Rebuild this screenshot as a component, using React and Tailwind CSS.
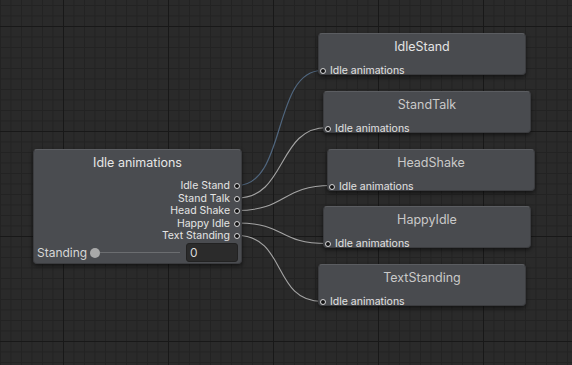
import React from "react";

const rightNodes = [
  { name: "IdleStand", pos: "left-[318px] top-[33px]", title: "text-[#e4e4e4]" },
  { name: "StandTalk", pos: "left-[323px] top-[91px]", title: "text-[#c9c9c9]" },
  { name: "HeadShake", pos: "left-[327px] top-[149px]", title: "text-[#c9c9c9]" },
  { name: "HappyIdle", pos: "left-[323px] top-[206px]", title: "text-[#c9c9c9]" },
  { name: "TextStanding", pos: "left-[318px] top-[264px]", title: "text-[#c9c9c9]" },
];

const ports = ["Idle Stand", "Stand Talk", "Head Shake", "Happy Idle", "Text Standing"];

function Dot() {
  return (
    <span className="block w-[4px] h-[4px] rounded-full bg-[#111111] outline outline-1 outline-[#cfcfcf] shrink-0" />
  );
}

function RightNode({ name, pos, title }) {
  return (
    <div
      className={`absolute ${pos} w-[208px] h-[42px] rounded-[4px] bg-[#494b4f] border border-[#3b3c3f] border-t-[#5b5d61] shadow-[0_2px_4px_rgba(0,0,0,0.55)]`}
    >
      <div className={`pt-[5px] text-center text-[12.5px] leading-[16px] ${title}`}>{name}</div>
      <div className="mt-[10px] flex items-center pl-[2px] h-[12px]">
        <Dot />
        <span className="ml-[5px] text-[10.5px] leading-[12px] text-[#e2e2e2]">Idle animations</span>
      </div>
    </div>
  );
}

export default function App() {
  return (
    <div
      className="relative w-[572px] h-[365px] overflow-hidden bg-[#2a2a2a] [background-image:linear-gradient(#181818_1px,transparent_1px),linear-gradient(90deg,#181818_1px,transparent_1px),linear-gradient(#232323_1px,transparent_1px),linear-gradient(90deg,#232323_1px,transparent_1px)] [background-size:105px_105px,105px_105px,10.5px_10.5px,10.5px_10.5px] [background-position:63px_26px,63px_26px,63px_26px,63px_26px]"
      style={{ fontFamily: "Inter, 'Noto Sans', 'Liberation Sans', sans-serif" }}
    >
      <svg className="absolute inset-0 pointer-events-none" width="572" height="365" fill="none">
        <path d="M237 185.5 C 287 185.5, 272 70.5, 322 70.5" stroke="#50667e" strokeWidth="1.2" />
        <path d="M237 198 C 287 198, 277 127.5, 327 127.5" stroke="#a4a4a4" strokeWidth="1.1" />
        <path d="M237 210.5 C 287 210.5, 281 185.5, 331 185.5" stroke="#a4a4a4" strokeWidth="1.1" />
        <path d="M237 223 C 287 223, 277 243.5, 327 243.5" stroke="#a4a4a4" strokeWidth="1.1" />
        <path d="M237 235.5 C 287 235.5, 272 301.5, 322 301.5" stroke="#a4a4a4" strokeWidth="1.1" />
      </svg>

      {/* Blend tree node */}
      <div className="absolute left-[33px] top-[149px] w-[209px] h-[115px] rounded-[4px] bg-[#4a4c50] border border-[#3b3c3f] border-t-[#5d5f63] shadow-[0_2px_4px_rgba(0,0,0,0.55)] flex flex-col">
        <div className="pt-[5px] text-center text-[12.5px] leading-[16px] text-[#e6e6e6]">Idle animations</div>
        <div className="mt-[9px] flex flex-col items-end pr-[2px]">
          {ports.map((p) => (
            <div key={p} className="flex items-center h-[12.5px]">
              <span className="text-[10.5px] leading-[12.5px] text-[#e4e4e4]">{p}</span>
              <span className="ml-[5px]">
                <Dot />
              </span>
            </div>
          ))}
        </div>
        <div className="mt-[0px] flex items-center pl-[3px] pr-[3px] h-[20px]">
          <span className="text-[12px] leading-[14px] text-[#d6d6d6]">Standing</span>
          <div className="ml-[3px] flex items-center w-[92px]">
            <span className="block w-[10px] h-[10px] rounded-full bg-[#a9a9a9] shrink-0" />
            <span className="block h-[1px] w-[80px] bg-[#6b6d70]" />
          </div>
          <div className="ml-auto w-[52px] h-[19px] rounded-[3px] bg-[#2b2b2b] border border-[#222222] flex items-center pl-[3px]">
            <span className="text-[12px] leading-[14px] text-[#d8d8d8]">0</span>
          </div>
        </div>
      </div>

      {rightNodes.map((n) => (
        <RightNode key={n.name} {...n} />
      ))}
    </div>
  );
}
